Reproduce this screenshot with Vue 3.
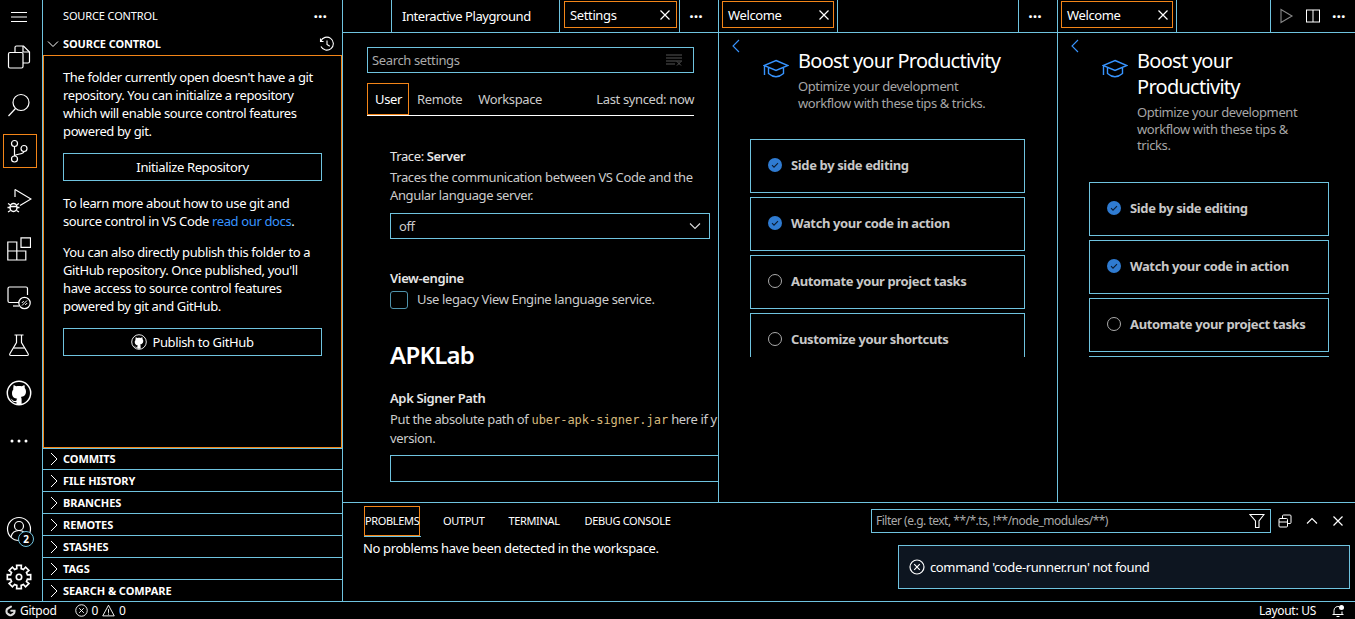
<script setup>
const collapsed = ['Commits', 'File History', 'Branches', 'Remotes', 'Stashes', 'Tags', 'Search & Compare']
const gearPath = (() => {
  const cx = 12, cy = 12, teeth = 8
  let d = ''
  for (let i = 0; i < teeth; i++) {
    const a = (i / teeth) * Math.PI * 2
    const pts = [[-0.25, 8], [-0.2, 11], [0.2, 11], [0.25, 8]]
    for (const [o, r] of pts) {
      const x = cx + r * Math.cos(a + o), y = cy + r * Math.sin(a + o)
      d += (d ? 'L' : 'M') + x.toFixed(2) + ' ' + y.toFixed(2)
    }
  }
  return d + 'Z'
})()
const octo = 'M4.6 3.2c.7 0 1.3.4 1.7.7.5-.1 1.1-.2 1.7-.2s1.2.1 1.7.2c.4-.3 1-.7 1.7-.7.2.6.2 1.2.1 1.7.5.6.8 1.3.8 2.2 0 2.6-1.7 3.2-3.2 3.4.3.3.5.7.5 1.3v3h-3.2v-1.2c-1 .2-2.3 0-2.9-1.3 0 0-.4-.8-1-.9.9 0 1.5.9 1.6 1.1.5.6 1.4.4 2.3.2 0-.5.2-.9.5-1.2-1.5-.2-3.2-.8-3.2-3.4 0-.9.3-1.6.8-2.2-.1-.5-.1-1.1.1-1.7z'
const welcomes = [
  {
    key: 'a',
    title: ['Boost your Productivity'],
    sub: ['Optimize your development', 'workflow with these tips & tricks.'],
    gap: 'gap-a',
    cards: [['Side by side editing', true], ['Watch your code in action', true], ['Automate your project tasks', false], ['Customize your shortcuts', false]]
  },
  {
    key: 'b',
    title: ['Boost your', 'Productivity'],
    sub: ['Optimize your development', 'workflow with these tips &', 'tricks.'],
    gap: 'gap-b',
    cards: [['Side by side editing', true], ['Watch your code in action', true], ['Automate your project tasks', false], ['', false]]
  }
]
</script>

<template>
  <div class="app">
    <div class="main">
      <nav class="activity">
        <div class="menu"><svg width="16" height="12" viewBox="0 0 16 12"><path d="M0 1.500h16M0 6h16M0 10.500h16" stroke="#fff" fill="none"/></svg></div>
        <div class="act"><svg width="24" height="24" viewBox="0 0 24 24" class="ic"><rect x="1.500" y="7.500" width="14.500" height="15.500" rx="1.500"/><path d="M8 7V2.500Q8 1 9.500 1h7l6 6v9.500q0 1.500-1.500 1.500H16"/><path d="M16 1v6h6"/></svg></div>
        <div class="act"><svg width="24" height="24" viewBox="0 0 24 24" class="ic"><circle cx="14" cy="9.500" r="8"/><path d="M8.500 15.500L1.500 23"/></svg></div>
        <div class="act active"><svg width="24" height="24" viewBox="0 0 24 24" class="ic"><circle cx="7.500" cy="4.500" r="3"/><circle cx="7.500" cy="20" r="3"/><circle cx="17" cy="9.500" r="3"/><path d="M7.500 7.500V17M17 12.500c0 3-9.500 2.500-9.500 4.500"/></svg></div>
        <div class="act"><svg width="26" height="26" viewBox="0 0 26 26" class="ic"><path d="M9 1.500L25 11 14 17.500"/><path d="M9 1.500V9"/><ellipse cx="7.500" cy="19.500" rx="3.500" ry="4" stroke-width="1.500"/><path d="M2 15.500l2.500 1.500M13 15.500l-2.500 1.500M1.500 19.500H4M11 19.500h2.500M2 24l2.500-1.500M13 24l-2.500-1.500M4 18.500h7" stroke-width="1.300"/></svg></div>
        <div class="act"><svg width="24" height="24" viewBox="0 0 24 24" class="ic"><path d="M.8 5h9v9h-9zM.8 14h9v9h-9zM9.800 14h9v9h-9zM14 .8h9.500v9.500H14z"/></svg></div>
        <div class="act"><svg width="26" height="26" viewBox="0 0 26 26" class="ic"><path d="M13 18.500H3.500Q2 18.500 2 17V4.500Q2 3 3.500 3H20q1.500 0 1.500 1.500V11"/><path d="M7 22h6"/><circle cx="18.500" cy="19" r="5.700" fill="#000"/><path d="M16 21.500l5-5M15.800 19l2-2M19.200 21l2-2" stroke-width="1"/></svg></div>
        <div class="act"><svg width="24" height="24" viewBox="0 0 24 24" class="ic"><path d="M7.500 2h9M9.500 2v7.500L3 20.500q-1 2 1 2h16q2 0 1-2L14.500 9.500V2"/><path d="M6.500 15h11"/></svg></div>
        <div class="act"><svg width="26" height="26" viewBox="0 0 16 16"><circle cx="8" cy="8" r="7.200" fill="none" stroke="#fff" stroke-width=".9"/><path :d="octo" fill="#fff"/></svg></div>
        <div class="act"><svg width="18" height="4" viewBox="0 0 18 4"><circle cx="2" cy="2" r="1.500" fill="#fff"/><circle cx="9" cy="2" r="1.500" fill="#fff"/><circle cx="16" cy="2" r="1.500" fill="#fff"/></svg></div>
        <div class="act-bottom">
          <div class="act account">
            <svg width="26" height="26" viewBox="0 0 26 26" class="ic"><circle cx="13" cy="13" r="11.500"/><circle cx="13" cy="10" r="4.500"/><path d="M5 21c1-5 4-6.500 8-6.500s7 1.500 8 6.500"/></svg>
            <span class="badge">2</span>
          </div>
          <div class="act"><svg width="26" height="26" viewBox="0 0 24 24" class="ic"><path :d="gearPath" stroke-width="1.500"/><circle cx="12" cy="12" r="2.500" stroke-width="1.500"/></svg></div>
        </div>
      </nav>

      <aside class="side">
        <header class="side-head">
          <span>SOURCE CONTROL</span>
          <span class="dots">···</span>
        </header>
        <div class="section-head">
          <svg class="chev" width="12" height="12" viewBox="0 0 12 12"><path d="M1 3.500l5 5 5-5" fill="none" stroke="#fff"/></svg>
          <b>SOURCE CONTROL</b>
          <svg class="history" width="16" height="16" viewBox="0 0 16 16"><path d="M1.500 2.500v3h3M1.800 5.200A6.500 6.500 0 1 1 2 10.500M8 4.500v4l2.800 1.700" fill="none" stroke="#fff" stroke-width="1.100"/></svg>
        </div>
        <div class="welcome-view">
          <p>The folder currently open doesn't have a git<br>repository. You can initialize a repository<br>which will enable source control features<br>powered by git.</p>
          <button class="btn first">Initialize Repository</button>
          <p class="p2">To learn more about how to use git and<br>source control in VS Code <span class="link">read our docs</span>.</p>
          <p class="p3">You can also directly publish this folder to a<br>GitHub repository. Once published, you'll<br>have access to source control features<br>powered by git and GitHub.</p>
          <button class="btn second">
            <svg width="16" height="16" viewBox="0 0 16 16"><circle cx="8" cy="8" r="7.300" fill="none" stroke="#fff" stroke-width=".9"/><path :d="octo" fill="#fff"/></svg>
            Publish to GitHub
          </button>
        </div>
        <div v-for="c in collapsed" :key="c" class="row">
          <svg width="12" height="14" viewBox="0 0 12 14"><path d="M3 1l6 6-6 6" fill="none" stroke="#fff"/></svg>
          <b>{{ c.toUpperCase() }}</b>
        </div>
      </aside>

      <section class="workbench">
        <div class="groups">
          <div class="group g1">
            <div class="tabs">
              <div class="tab-space first-space"></div>
              <div class="tab plain">Interactive Playground</div>
              <div class="tab settings-tab"><div class="tab-in"><span>Settings</span><svg width="12" height="12" viewBox="0 0 12 12"><path d="M1.500 1.500l9 9M10.500 1.500l-9 9" stroke="#fff" stroke-width="1.200"/></svg></div></div>
              <div class="tab-actions"><span class="dots">···</span></div>
            </div>
            <div class="settings">
              <div class="search"><span>Search settings</span>
                <svg width="16" height="12" viewBox="0 0 16 12"><path d="M0 1h16M0 4h16M0 7h16M0 10h9M11 7.500l4 4M15 7.500l-4 4" stroke="#555" fill="none"/></svg>
              </div>
              <div class="set-tabs">
                <div class="set-tab on">User</div>
                <div class="set-tab">Remote</div>
                <div class="set-tab">Workspace</div>
                <div class="synced">Last synced: now</div>
              </div>
              <div class="set-list">
                <div class="s-title s1"><span class="light">Trace: </span>Server</div>
                <div class="s-desc">Traces the communication between VS Code and the<br>Angular language server.</div>
                <div class="select"><span>off</span><svg width="14" height="14" viewBox="0 0 14 14"><path d="M2 4.500l5 5 5-5" fill="none" stroke="#ddd" stroke-width="1.100"/></svg></div>
                <div class="s-title s2">View-engine</div>
                <div class="check-row"><span class="check"></span><span class="s-desc">Use legacy View Engine language service.</span></div>
                <h2>APKLab</h2>
                <div class="s-title s3">Apk Signer Path</div>
                <div class="s-desc clip">Put the absolute path of <code>uber-apk-signer.jar</code> here if y<br>version.</div>
                <div class="input"></div>
              </div>
            </div>
          </div>

          <div v-for="w in welcomes" :key="w.key" class="group" :class="w.key === 'a' ? 'g2' : 'g3'">
            <div class="tabs">
              <div class="tab welcome-tab"><div class="tab-in"><span>Welcome</span><svg width="12" height="12" viewBox="0 0 12 12"><path d="M1.500 1.500l9 9M10.500 1.500l-9 9" stroke="#fff" stroke-width="1.200"/></svg></div></div>
              <div class="tab-fill"></div>
              <div v-if="w.key === 'a'" class="tab-actions"><span class="dots">···</span></div>
              <div v-else class="tab-actions last">
                <svg width="16" height="16" viewBox="0 0 16 16"><path d="M3 1.500L14 8 3 14.500z" fill="none" stroke="#888" stroke-width="1.100"/></svg>
                <svg width="16" height="16" viewBox="0 0 16 16"><rect x="1.500" y="2" width="13" height="12" fill="none" stroke="#fff"/><path d="M8 2v12" stroke="#fff"/></svg>
                <span class="dots">···</span>
              </div>
            </div>
            <div class="gs">
              <svg class="back" width="10" height="14" viewBox="0 0 10 14"><path d="M8 1L2 7l6 6" fill="none" stroke="#3794ff" stroke-width="1.100"/></svg>
              <div class="gs-head">
                <svg class="cap" width="26" height="20" viewBox="0 0 26 20"><path d="M13 1.500L25 6.500 13 11.500 1 6.500zM1.500 7v9M5.500 9v5.500Q13 21 20.500 14.500V9" fill="none" stroke="#3794ff" stroke-width="1.400"/></svg>
                <div>
                  <h1><template v-for="t in w.title" :key="t">{{ t }}<br></template></h1>
                  <div class="gs-sub"><template v-for="t in w.sub" :key="t">{{ t }}<br></template></div>
                </div>
              </div>
              <div class="cards" :class="w.gap">
                <div v-for="(c, i) in w.cards" :key="i" class="card">
                  <template v-if="c[0]">
                    <svg v-if="c[1]" width="14" height="14" viewBox="0 0 14 14"><circle cx="7" cy="7" r="7" fill="#2f7bd1"/><path d="M4 7.200l2 2 4-4" fill="none" stroke="#0b1b30" stroke-width="1.100"/></svg>
                    <svg v-else width="14" height="14" viewBox="0 0 14 14"><circle cx="7" cy="7" r="6.500" fill="none" stroke="#aaa"/></svg>
                    <b>{{ c[0] }}</b>
                  </template>
                </div>
              </div>
            </div>
          </div>
        </div>

        <div class="panel">
          <div class="panel-bar">
            <div class="p-tab on"><span>PROBLEMS</span></div>
            <div class="p-tab t2">OUTPUT</div>
            <div class="p-tab t3">TERMINAL</div>
            <div class="p-tab t4">DEBUG CONSOLE</div>
            <div class="filter">
              <span>Filter (e.g. text, **/*.ts, !**/node_modules/**)</span>
              <svg width="16" height="16" viewBox="0 0 16 16"><path d="M1 1.500h14L10 8v6.500H6.500V8z" fill="none" stroke="#fff" stroke-width="1.100"/></svg>
            </div>
            <div class="p-actions">
              <svg width="14" height="14" viewBox="0 0 14 14"><rect x="1" y="4.500" width="8.500" height="8.500" rx="1" fill="none" stroke="#fff"/><path d="M4.500 4.500V2q0-1 1-1H12q1 0 1 1v6.500q0 1-1 1H9.500M1 8h8.500" fill="none" stroke="#fff"/></svg>
              <svg width="14" height="14" viewBox="0 0 14 14"><path d="M2 9.500l5-5 5 5" fill="none" stroke="#fff" stroke-width="1.100"/></svg>
              <svg width="12" height="12" viewBox="0 0 12 12"><path d="M1.500 1.500l9 9M10.500 1.500l-9 9" stroke="#fff" stroke-width="1.200"/></svg>
            </div>
          </div>
          <div class="no-problems">No problems have been detected in the workspace.</div>
          <div class="toast">
            <svg width="16" height="16" viewBox="0 0 16 16"><circle cx="8" cy="8" r="7" fill="none" stroke="#fff" stroke-width="1.200"/><path d="M5.200 5.200l5.600 5.600M10.800 5.200l-5.600 5.600" stroke="#fff" stroke-width="1.200"/></svg>
            <span>command 'code-runner.run' not found</span>
          </div>
        </div>
      </section>
    </div>

    <footer class="status">
      <svg class="gitpod" width="11" height="12" viewBox="0 0 11 12"><path d="M6 1.700L2.800 3.500Q1.500 4.300 1.500 5.800v1q0 1.500 1.300 2.200l1.700 1q1 .5 2 0l1.700-1Q9.500 8.300 9.500 6.800V5.700H6.300" fill="none" stroke="#ddd" stroke-width="2.100" stroke-linecap="round"/></svg>
      <span class="gp">Gitpod</span>
      <svg class="err" width="13" height="13" viewBox="0 0 14 14"><circle cx="7" cy="7" r="6.200" fill="none" stroke="#fff"/><path d="M4.500 4.500l5 5M9.500 4.500l-5 5" stroke="#fff"/></svg>
      <span class="n">0</span>
      <svg class="warn" width="13" height="13" viewBox="0 0 14 14"><path d="M7 1.300L13.200 12.800H.8zM7 5.500v4M7 10.300v1.200" fill="none" stroke="#fff"/></svg>
      <span class="n">0</span>
      <span class="layout">Layout: US</span>
      <svg class="bell" width="14" height="14" viewBox="0 0 14 14"><path d="M3 10.500V6.500a4 4 0 0 1 5-3.900M11 7.500v3M1.500 10.500h11M5.500 12.500h3" fill="none" stroke="#fff"/><circle cx="10.500" cy="3.500" r="2.500" fill="#fff"/></svg>
    </footer>
  </div>
</template>

<style>
html, body { margin: 0; background: #000; overflow: hidden; }
</style>

<style scoped>
.app {
  --teal: #6fc3df;
  --orange: #f38518;
  height: 619px;
  width: 1355px;
  display: flex;
  flex-direction: column;
  background: #000;
  color: #fff;
  font: 13px/18px "Noto Sans", "Open Sans", sans-serif;
  letter-spacing: -0.37px;
  overflow: hidden;
}
.main { display: flex; height: 601px; }
.ic { fill: none; stroke: #fff; stroke-width: 1.2; }

.activity { width: 42px; border-right: 1px solid var(--teal); display: flex; flex-direction: column; flex: none; }
.menu { height: 33px; display: flex; align-items: center; justify-content: center; padding-right: 4px; box-sizing: border-box; }
.act { height: 48px; display: flex; align-items: center; justify-content: center; box-sizing: border-box; padding-right: 4px; }
.act.active { position: relative; padding-bottom: 4px; }
.act.active::after { content: ""; position: absolute; left: 3px; top: 5px; width: 32px; height: 32px; border: 1px solid var(--orange); }
.act-bottom { margin-top: auto; }
.account { position: relative; }
.badge { position: absolute; left: 18px; top: 26px; width: 16px; height: 16px; box-sizing: border-box; border: 1px solid var(--teal); border-radius: 50%; background: #000; font-size: 10px; line-height: 14px; text-align: center; font-weight: 700; letter-spacing: 0; }

.side { width: 299px; border-right: 1px solid var(--teal); display: flex; flex-direction: column; flex: none; }
.side-head { height: 33px; display: flex; align-items: center; justify-content: space-between; padding: 0 15px 2px 20px; font-size: 11px; letter-spacing: -0.13px; box-sizing: border-box; }
.dots { font-size: 16px; font-weight: 700; letter-spacing: 0; line-height: 14px; color: #fff; }
.section-head { height: 22px; display: flex; align-items: center; font-size: 11px; letter-spacing: -0.1px; position: relative; padding-left: 4px; }
.section-head b { margin-left: 4px; }
.history { position: absolute; right: 7px; top: 3px; }
.welcome-view { flex: 1; border: 1px solid var(--orange); padding: 12px 20px 0 19px; min-height: 0; }
p { margin: 0; white-space: nowrap; }
.btn { display: flex; align-items: center; justify-content: center; gap: 5px; box-sizing: border-box; width: 259px; height: 28px; background: transparent; border: 1px solid var(--teal); color: #fff; font: inherit; letter-spacing: inherit; padding: 0; }
.btn.first { margin-top: 13px; }
.p2 { margin-top: 13px; }
.p3 { margin-top: 13px; }
.btn.second { margin-top: 13px; }
.link { color: #3794ff; }
.row { height: 21px; border-bottom: 1px solid var(--teal); display: flex; align-items: center; padding-left: 5px; font-size: 11px; letter-spacing: -0.07px; }
.row:nth-child(4) { height: 20px; border-top: 1px solid var(--teal); }
.row:last-child { border-bottom: 0; }
.row b { margin-left: 3px; }

.workbench { flex: 1; min-width: 0; display: flex; flex-direction: column; position: relative; }
.groups { display: flex; height: 502px; flex: none; }
.group { display: flex; flex-direction: column; box-sizing: border-box; flex: none; overflow: hidden; }
.g1 { width: 376px; border-right: 1px solid var(--teal); }
.g2 { width: 339px; border-right: 1px solid var(--teal); }
.g3 { width: 297px; }
.tabs { height: 33px; flex: none; display: flex; border-bottom: 1px solid var(--teal); box-sizing: border-box; }
.tab-space { width: 49px; border-right: 1px solid var(--teal); box-sizing: border-box; }
.tab { border-right: 1px solid var(--teal); display: flex; align-items: center; }
.tab.plain { width: 168px; padding-left: 10px; box-sizing: border-box; flex: none; letter-spacing: -0.45px; }
.settings-tab { width: 120px; padding: 1px 2px 0 4px; box-sizing: border-box; flex: none; align-items: flex-start; }
.welcome-tab { width: 119px; padding: 1px 3px 0 3px; box-sizing: border-box; flex: none; align-items: flex-start; }
.tab-in { flex: 1; height: 27px; border: 1px solid var(--orange); display: flex; align-items: center; justify-content: space-between; padding: 0 4px 0 5px; box-sizing: border-box; }
.settings-tab .tab-in { padding-right: 5px; }
.welcome-tab .tab-in { padding-right: 3px; }
.tab-fill { flex: 1; border-right: 1px solid var(--teal); }
.tab-actions { width: 38px; flex: none; display: flex; align-items: center; justify-content: center; padding-right: 6px; box-sizing: border-box; }
.tab-actions.last { width: 84px; gap: 11px; justify-content: flex-start; padding: 0 0 0 7px; }

.settings { padding: 14px 0 0 24px; }
.search { width: 327px; height: 26px; box-sizing: border-box; border: 1px solid var(--teal); display: flex; align-items: center; justify-content: space-between; padding: 0 11px 0 4px; color: #aaa; }
.set-tabs { width: 327px; height: 33px; margin-top: 10px; display: flex; border-bottom: 1px solid #fff; box-sizing: border-box; color: #ccc; align-items: stretch; }
.set-tab { display: flex; align-items: center; padding: 0 7px; height: 32px; box-sizing: border-box; border: 1px solid transparent; }
.set-tab.on { color: #fff; border-color: var(--orange); width: 42px; padding: 0 7px; }
.synced { margin-left: auto; display: flex; align-items: center; height: 32px; }
.set-list { padding-left: 23px; color: #ccc; }
.s-title { font-weight: 600; color: #e6e6e6; }
.light { font-weight: 400; }
.s1 { margin-top: 31px; }
.s2 { margin-top: 30px; }
.s3 { margin-top: 18px; }
.s-desc { margin-top: 3px; white-space: nowrap; }
.select { width: 320px; height: 26px; margin-top: 9px; box-sizing: border-box; border: 1px solid var(--teal); display: flex; align-items: center; justify-content: space-between; padding: 0 7px 0 8px; }
.check-row { display: flex; align-items: center; gap: 9px; margin-top: 4px; height: 18px; }
.check-row .s-desc { margin-top: -2px; }
.check { width: 18px; height: 18px; box-sizing: border-box; border: 1px solid #4f93ac; border-radius: 3px; }
h2 { font-size: 24px; line-height: 32px; font-weight: 600; color: #fff; margin: 30px 0 1px; letter-spacing: -0.75px; }
code { font: 12px/18px "DejaVu Sans Mono", "Liberation Mono", monospace; color: #d7ba7d; letter-spacing: -0.03px; }
.input { width: 340px; height: 27px; margin-top: 8px; box-sizing: border-box; border: 1px solid var(--teal); }

.gs { position: relative; height: 324px; overflow: hidden; padding: 15px 0 0 31px; box-sizing: border-box; }
.back { position: absolute; left: 12px; top: 6px; }
.gs-head { display: flex; padding-left: 13px; }
.cap { margin-top: 11px; flex: none; margin-right: 9px; }
h1 { font-size: 20px; line-height: 26px; font-weight: 400; margin: 0; white-space: nowrap; letter-spacing: -0.72px; }
.gs-sub { color: #a6a6a6; line-height: 16.500px; margin-top: 4px; white-space: nowrap; letter-spacing: -0.4px; }
.cards { display: flex; flex-direction: column; gap: 4px; }
.gap-a { width: 275px; margin-top: 28px; }
.gap-b { width: 240px; margin-top: 28px; }
.card { height: 54px; flex: none; box-sizing: border-box; border: 1px solid var(--teal); display: flex; align-items: center; padding: 0 0 2px 17px; gap: 9px; color: #c8c8c8; }
.card svg { flex: none; }

.panel { flex: 1; border-top: 1px solid var(--teal); position: relative; padding-left: 20px; }
.panel-bar { display: flex; height: 34px; position: relative; }
.p-tab { font-size: 11px; letter-spacing: -0.35px; line-height: 30px; height: 30px; margin-top: 3px; position: relative; }
.p-tab.on { width: 56px; box-sizing: border-box; border: 1px solid var(--orange); text-align: center; line-height: 28px; margin-left: 1px; }
.p-tab.on::after { content: ""; position: absolute; left: -1px; right: -2px; bottom: -2px; height: 1px; background: var(--teal); }
.t2 { margin-left: 23px; }
.t3 { margin-left: 24px; }
.t4 { margin-left: 25px; }
.filter { position: absolute; left: 508px; top: 6px; width: 400px; height: 24px; box-sizing: border-box; border: 1px solid var(--teal); display: flex; align-items: center; justify-content: space-between; padding: 0 5px 0 4px; font-size: 12px; letter-spacing: -0.5px; color: #aaa; }
.p-actions { position: absolute; left: 915px; top: 10px; display: flex; align-items: center; gap: 13px; height: 16px; }
.no-problems { margin-top: 2px; }
.toast { position: absolute; right: 5px; top: 42px; width: 452px; height: 44px; box-sizing: border-box; background: #0d1520; border: 1px solid var(--teal); display: flex; align-items: center; padding-left: 10px; gap: 5px; }

.status { height: 17px; flex: none; border-top: 1px solid var(--teal); display: flex; align-items: center; font-size: 12px; line-height: 17px; letter-spacing: -0.28px; }
.gitpod { margin-left: 5px; }
.gp { margin-left: 4px; }
.err { margin-left: 18px; }
.n { margin-left: 4px; }
.warn { margin-left: 4px; }
.layout { margin-left: auto; }
.bell { margin: 0 10px 0 15px; }
</style>
